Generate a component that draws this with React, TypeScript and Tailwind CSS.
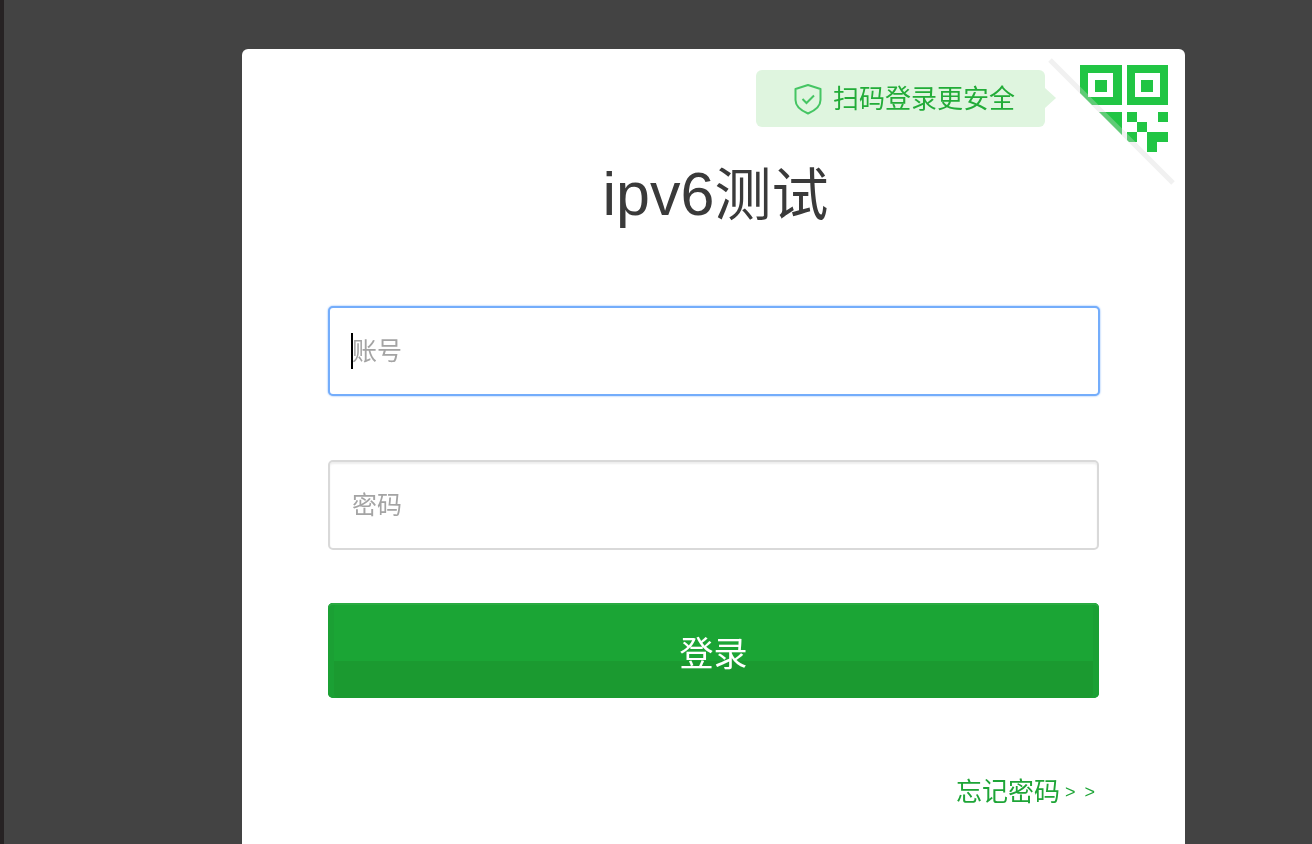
export default function App() {
  const font = "font-['Liberation_Sans','Noto_Sans_CJK_SC',sans-serif]";
  return (
    <div className={`flex h-[844px] w-[1312px] overflow-hidden bg-[#434343] blur-[0.4px] ${font}`}>
      <div className="h-full w-[4px] shrink-0 bg-[#262223]" />
      <div className="relative ml-[238px] mt-[49px] h-[900px] w-[943px] shrink-0 rounded-t-[6px] bg-white px-[86px] pt-[105px]">
        {/* scan tip */}
        <div className="absolute left-[514px] top-[21px] flex h-[57px] w-[289px] items-center rounded-[6px] bg-[#dff5df] pl-[37px]">
          <svg width="30" height="32" viewBox="0 0 30 32" fill="none" className="mr-[10px] shrink-0">
            <path d="M15 2 L27.5 6 V17 C27.5 24 21 28 15 30.5 C9 28 2.500 24 2.500 17 V6 Z" stroke="#45c563" strokeWidth="2" strokeLinejoin="round" />
            <path d="M9.500 16 L13.500 20 L21 12.500" stroke="#45c563" strokeWidth="2" />
          </svg>
          <span className="whitespace-nowrap text-[26px] leading-none text-[#22ac38]">扫码登录更安全</span>
          <div className="absolute right-[-11px] top-[18px] h-0 w-0 border-y-[10px] border-l-[11px] border-y-transparent border-l-[#dff5df]" />
        </div>
        {/* QR corner */}
        <svg width="150" height="150" viewBox="0 0 150 150" className="absolute left-[798px] top-[-4px]">
          <defs>
            <clipPath id="fold">
              <path d="M0 8 L142 150 H150 V0 H0 Z" />
            </clipPath>
          </defs>
          <g fill="#21c544" clipPath="url(#fold)">
            <path fillRule="evenodd" d="M40 20h42v40h-42z M48 28v24h25v-24z M55 35h12v12h-12z" />
            <path fillRule="evenodd" d="M87 20h41v40h-41z M95 28v24h25v-24z M101 35h12v12h-12z" />
            <path d="M58 67h24v24h-24z" />
            <path d="M87 67h10v10h-10z M118 67h10v10h-10z M97 77h10v10h-10z M87 87h10v10h-10z M107 87h21v10h-21z M107 97h10v10h-10z" />
          </g>
          <path d="M10 15 L133 138" stroke="#d8d8d8" strokeOpacity="0.35" strokeWidth="5" />
        </svg>
        <h1 className="h-[80px] pl-[4px] text-center text-[57px] font-normal leading-[80px] text-[#3a3a3a]">
          <span className="text-[61px]">ipv6</span>测试
        </h1>
        <div className="relative mt-[72px]">
          <input
            placeholder="账号"
            className="block h-[90px] w-[772px] rounded-[5px] border-[2px] border-[#74adfb] bg-white pl-[22px] text-[25px] shadow-[0_0_2px_#74adfb] outline-none placeholder:text-[#a4a4a4]"
          />
          <div className="absolute left-[23px] top-[27px] h-[36px] w-[2px] bg-black" />
        </div>
        <input
          placeholder="密码"
          className="mt-[64px] block h-[90px] w-[771px] rounded-[5px] border-[2px] border-[#d9d9d9] bg-white pl-[22px] text-[25px] shadow-[inset_0_2px_2px_#eeeeee] outline-none placeholder:text-[#a4a4a4]"
        />
        <button className="mt-[53px] block h-[95px] w-[771px] rounded-[5px] bg-[linear-gradient(#1ba535_61%,#1b9a30_61%)] pt-[8px] text-[34px] text-white shadow-[inset_0_2px_0_#2aaa42,inset_-6px_0_0_#1ba034,inset_6px_0_0_#1ba034]">
          登录
        </button>
        <div className="mt-[80px] flex h-[28px] w-[771px] items-center justify-end pr-[4px]">
          <a className="whitespace-nowrap text-[26px] leading-none text-[#1ea537]">忘记密码</a>
          <span className="ml-[5px] whitespace-nowrap text-[18px] leading-none text-[#1ea537] [word-spacing:4px]">&gt; &gt;</span>
        </div>
      </div>
    </div>
  );
}
